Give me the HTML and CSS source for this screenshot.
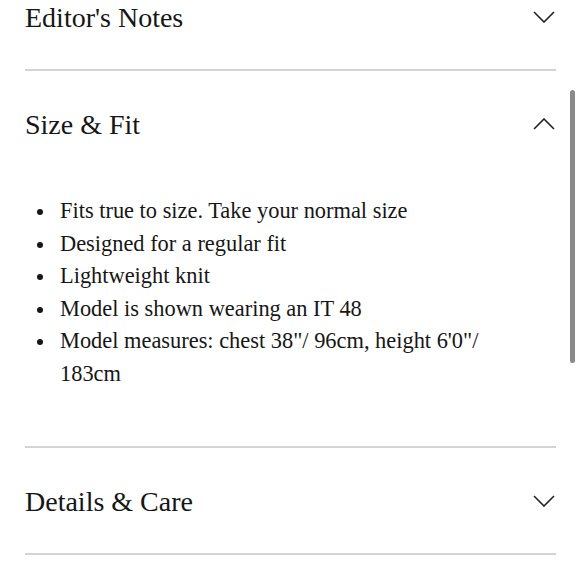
FILE: index.html
```html
<!DOCTYPE html>
<html lang="en">
<head>
<meta charset="utf-8">
<title>Product details</title>
<link rel="stylesheet" href="styles.css">
</head>
<body>
<div class="page">
  <section class="acc-item first">
    <div class="acc-head">
      <h2 class="acc-title">Editor's Notes</h2>
      <svg class="chev" width="22" height="12" viewBox="0 0 22 12"><path d="M1 1 L11 11 L21 1" fill="none" stroke="#222" stroke-width="1.6"/></svg>
    </div>
  </section>
  <section class="acc-item open">
    <div class="acc-head">
      <h2 class="acc-title">Size &amp; Fit</h2>
      <svg class="chev" width="22" height="12" viewBox="0 0 22 12"><path d="M1 11 L11 1 L21 11" fill="none" stroke="#222" stroke-width="1.6"/></svg>
    </div>
    <div class="acc-body">
      <ul class="fit-list">
        <li>Fits true to size. Take your normal size</li>
        <li>Designed for a regular fit</li>
        <li>Lightweight knit</li>
        <li>Model is shown wearing an IT 48</li>
        <li>Model measures: chest 38"/ 96cm, height 6'0"/ 183cm</li>
      </ul>
    </div>
  </section>
  <section class="acc-item">
    <div class="acc-head">
      <h2 class="acc-title">Details &amp; Care</h2>
      <svg class="chev" width="22" height="12" viewBox="0 0 22 12"><path d="M1 1 L11 11 L21 1" fill="none" stroke="#222" stroke-width="1.6"/></svg>
    </div>
  </section>
</div>
<div class="scrollbar"></div>
</body>
</html>
```
FILE: styles.css
```css
html, body {
  margin: 0;
  padding: 0;
  background: #fff;
  overflow: hidden;
}
body {
  font-family: "Liberation Serif", "Times New Roman", serif;
  color: #161616;
  width: 580px;
  height: 580px;
  position: relative;
}
.page {
  margin: -36px 24px 0 25px;
}
.acc-item {
  border-bottom: 2px solid #d4d4d4;
}
.acc-head {
  height: 105px;
  display: flex;
  align-items: center;
  justify-content: space-between;
}
.acc-title {
  margin: 0;
  padding-top: 3px;
  font-weight: normal;
  font-size: 28px;
  line-height: 1;
  color: #161616;
}
.chev {
  display: block;
  margin-right: 1px;
}
.acc-body {
  padding: 19px 0 56px 0;
}
.fit-list {
  margin: 0;
  padding: 0 36px 0 35px;
  list-style: none;
  font-size: 22.4px;
  line-height: 32.5px;
}
.fit-list li {
  position: relative;
}
.fit-list li::before {
  content: "";
  position: absolute;
  left: -23px;
  top: 14px;
  width: 6px;
  height: 6px;
  border-radius: 50%;
  background: #161616;
}
.scrollbar {
  position: absolute;
  left: 570px;
  top: 90px;
  width: 5px;
  height: 273px;
  border-radius: 3px;
  background: #8a8a8a;
}
```
